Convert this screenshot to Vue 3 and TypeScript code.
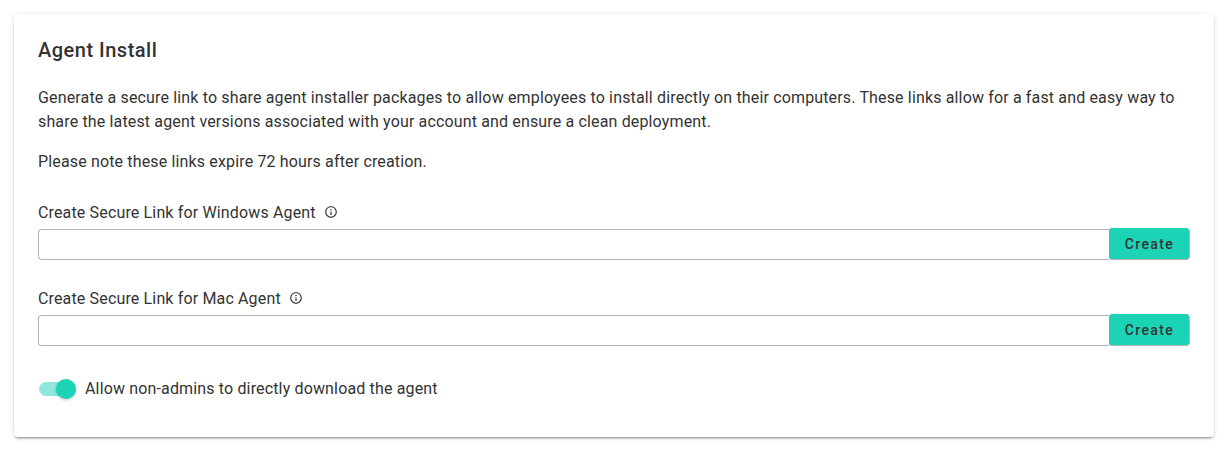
<script setup lang="ts">
const fields = [
  { id: 'windows', label: 'Create Secure Link for Windows Agent' },
  { id: 'mac', label: 'Create Secure Link for Mac Agent' },
];
</script>

<template>
  <main class="page">
    <section class="card">
      <h2 class="title">Agent Install</h2>
      <p class="text first">
        Generate a secure link to share agent installer packages to allow employees to install directly on their computers. These links allow for a fast and easy way to share the latest agent versions associated with your account and ensure a clean deployment.
      </p>
      <p class="text note">Please note these links expire 72 hours after creation.</p>
      <div v-for="f in fields" :key="f.id" class="field">
        <label class="label">
          <span>{{ f.label }}</span>
          <svg class="info" viewBox="0 0 24 24" width="14" height="14" aria-hidden="true">
            <path fill="#333" d="M11 7h2v2h-2zm0 4h2v6h-2zm1-9C6.48 2 2 6.48 2 12s4.48 10 10 10 10-4.48 10-10S17.52 2 12 2zm0 18c-4.41 0-8-3.59-8-8s3.59-8 8-8 8 3.59 8 8-3.59 8-8 8z" />
          </svg>
        </label>
        <div class="row">
          <input class="input" type="text" />
          <button class="btn" type="button">Create</button>
        </div>
      </div>
      <div class="switch-row">
        <span class="switch"><span class="track"></span><span class="thumb"></span></span>
        <span class="switch-label">Allow non-admins to directly download the agent</span>
      </div>
    </section>
  </main>
</template>

<style>
html, body { margin: 0; background: #fff; }
</style>

<style scoped>
.page {
  padding: 14px 13px 16px 14px;
  font-family: Roboto, "Liberation Sans", sans-serif;
  color: #333;
}
.card {
  box-sizing: border-box;
  height: 423px;
  padding: 24px 24px 0;
  background: #fff;
  border-radius: 4px;
  box-shadow: 0 3px 1px -2px rgba(0,0,0,.2), 0 2px 2px 0 rgba(0,0,0,.14), 0 1px 5px 0 rgba(0,0,0,.12);
}
.title {
  margin: 0;
  font-size: 20px;
  line-height: 24px;
  font-weight: 500;
  letter-spacing: 0.5px;
}
.text {
  margin: 0;
  font-size: 16px;
  line-height: 24px;
  letter-spacing: 0.15px;
}
.first { margin-top: 24px; }
.note { margin-top: 16px; }
.field { margin-top: 26px; }
.label {
  display: flex;
  align-items: center;
  gap: 8px;
  height: 24px;
  font-size: 16px;
  letter-spacing: 0.15px;
}
.row {
  display: flex;
  height: 31px;
  margin-top: 5px;
}
.input {
  flex: 1;
  min-width: 0;
  box-sizing: border-box;
  border: 1px solid #b5b5b5;
  border-right: 0;
  border-radius: 4px 0 0 4px;
  background: #fff;
  outline: none;
}
.btn {
  width: 81px;
  height: 32px;
  margin-top: -1px;
  border: 0;
  border-right: 1px solid #b5b5b5;
  border-bottom: 1px solid #b5b5b5;
  border-radius: 3px 4px 4px 3px;
  background: #1dd3b5;
  color: #333;
  font-family: inherit;
  font-size: 14px;
  font-weight: 500;
  letter-spacing: 1.4px;
  padding: 0 0 0 1px;
}
.switch-row {
  display: flex;
  align-items: center;
  gap: 9px;
  margin-top: 31px;
}
.switch {
  position: relative;
  width: 38px;
  height: 20px;
}
.track {
  position: absolute;
  left: 1px;
  top: 3px;
  width: 33px;
  height: 14px;
  border-radius: 7px;
  background: #8ee9da;
}
.thumb {
  position: absolute;
  left: 18px;
  top: 0;
  width: 20px;
  height: 20px;
  border-radius: 50%;
  background: #1dd3b5;
  box-shadow: 0 1px 3px rgba(0,0,0,.25);
}
.switch-label {
  font-size: 16px;
  line-height: 24px;
  letter-spacing: 0.15px;
}
</style>
